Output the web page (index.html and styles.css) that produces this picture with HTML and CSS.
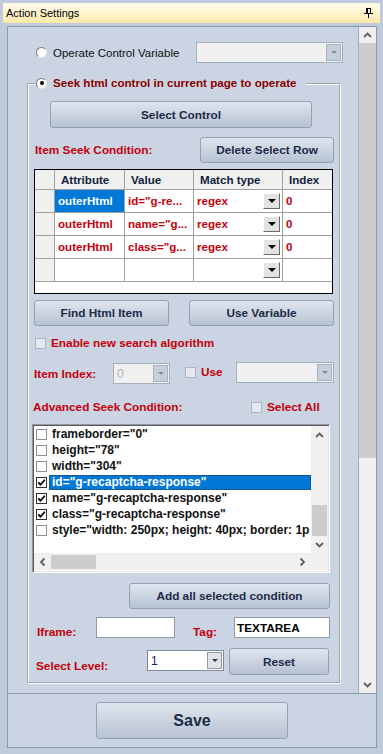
FILE: index.html
```html
<!DOCTYPE html>
<html lang="en">
<head>
    <meta charset="UTF-8">
    <meta name="viewport" content="width=device-width, initial-scale=1.0">
    <title>Action Settings</title>
    <link rel="stylesheet" href="styles.css">
</head>
<body>
    <div class="titlebar">
        <span class="title">Action Settings</span>
        <svg class="pin" width="9" height="10" viewBox="0 0 9 10">
            <rect x="2" y="0" width="5" height="1"/>
            <rect x="2" y="1" width="2" height="5"/>
            <rect x="6" y="1" width="1" height="5"/>
            <rect x="0" y="5" width="9" height="1"/>
            <rect x="4" y="6" width="1" height="4"/>
        </svg>
    </div>

    <div class="window">
        <div class="scroll-area">
            <div class="content">
                <div class="operate-row">
                    <span class="radio"></span>
                    <span class="operate-text">Operate Control Variable</span>
                    <div class="combo combo-off combo-var"><span class="drop"><i class="tri"></i></span></div>
                </div>

                <div class="group">
                    <div class="legend">
                        <span class="radio checked"></span>
                        <span>Seek html control in current page to operate</span>
                    </div>

                    <div class="g-row select-row">
                        <button class="btn btn-select">Select Control</button>
                    </div>

                    <div class="g-row cond-row">
                        <span class="label">Item Seek Condition:</span>
                        <button class="btn btn-delete">Delete Select Row</button>
                    </div>

                    <div class="grid-box">
                        <table class="grid">
                            <colgroup>
                                <col class="c0"><col class="c1"><col class="c2"><col class="c3"><col class="c4">
                            </colgroup>
                            <thead>
                                <tr><th class="rh"></th><th>Attribute</th><th>Value</th><th>Match type</th><th class="last">Index</th></tr>
                            </thead>
                            <tbody>
                                <tr>
                                    <td class="rh"></td>
                                    <td class="sel">outerHtml</td>
                                    <td>id="g-re...</td>
                                    <td><div class="match"><span>regex</span><span class="cell-drop"><i class="tri"></i></span></div></td>
                                    <td class="last">0</td>
                                </tr>
                                <tr>
                                    <td class="rh"></td>
                                    <td>outerHtml</td>
                                    <td>name="g...</td>
                                    <td><div class="match"><span>regex</span><span class="cell-drop"><i class="tri"></i></span></div></td>
                                    <td class="last">0</td>
                                </tr>
                                <tr>
                                    <td class="rh"></td>
                                    <td>outerHtml</td>
                                    <td>class="g...</td>
                                    <td><div class="match"><span>regex</span><span class="cell-drop"><i class="tri"></i></span></div></td>
                                    <td class="last">0</td>
                                </tr>
                                <tr>
                                    <td class="rh"></td>
                                    <td></td>
                                    <td></td>
                                    <td><div class="match"><span></span><span class="cell-drop"><i class="tri"></i></span></div></td>
                                    <td class="last"></td>
                                </tr>
                            </tbody>
                        </table>
                    </div>

                    <div class="g-row find-row">
                        <button class="btn btn-find">Find Html Item</button>
                        <button class="btn btn-usevar">Use Variable</button>
                    </div>

                    <div class="g-row enable-row">
                        <span class="check"></span>
                        <span class="label">Enable new search algorithm</span>
                    </div>

                    <div class="g-row index-row">
                        <span class="label index-label">Item Index:</span>
                        <div class="combo combo-off combo-index"><span class="value">0</span><span class="drop"><i class="tri"></i></span></div>
                        <span class="check use-check"></span>
                        <span class="label use-label">Use</span>
                        <div class="combo combo-off combo-use"><span class="drop"><i class="tri"></i></span></div>
                    </div>

                    <div class="g-row adv-row">
                        <span class="label adv-label">Advanced Seek Condition:</span>
                        <span class="check"></span>
                        <span class="label">Select All</span>
                    </div>

                    <div class="listbox">
                        <div class="list-main">
                            <div class="list-items">
                                <div class="item"><span class="cb"></span><span class="item-text">frameborder="0"</span></div>
                                <div class="item"><span class="cb"></span><span class="item-text">height="78"</span></div>
                                <div class="item"><span class="cb"></span><span class="item-text">width="304"</span></div>
                                <div class="item"><span class="cb on"><svg width="9" height="9" viewBox="0 0 9 9"><path d="M1.2 4.4l2.2 2.3 4.4-5"/></svg></span><span class="item-text selected">id="g-recaptcha-response"</span></div>
                                <div class="item"><span class="cb on"><svg width="9" height="9" viewBox="0 0 9 9"><path d="M1.2 4.4l2.2 2.3 4.4-5"/></svg></span><span class="item-text">name="g-recaptcha-response"</span></div>
                                <div class="item"><span class="cb on"><svg width="9" height="9" viewBox="0 0 9 9"><path d="M1.2 4.4l2.2 2.3 4.4-5"/></svg></span><span class="item-text">class="g-recaptcha-response"</span></div>
                                <div class="item"><span class="cb"></span><span class="item-text">style="width: 250px; height: 40px; border: 1p</span></div>
                            </div>
                            <div class="list-vscroll">
                                <span class="arrow"><svg class="chev" width="9" height="6" viewBox="0 0 9 6"><polyline points="1,5 4.5,1.5 8,5"/></svg></span>
                                <div class="track"><div class="thumb list-vthumb"></div></div>
                                <span class="arrow"><svg class="chev down" width="9" height="6" viewBox="0 0 9 6"><polyline points="1,5 4.5,1.5 8,5"/></svg></span>
                            </div>
                        </div>
                        <div class="list-hscroll">
                            <span class="arrow"><svg class="chev left" width="9" height="6" viewBox="0 0 9 6"><polyline points="1,5 4.5,1.5 8,5"/></svg></span>
                            <div class="htrack"><div class="thumb list-hthumb"></div></div>
                            <span class="arrow"><svg class="chev right" width="9" height="6" viewBox="0 0 9 6"><polyline points="1,5 4.5,1.5 8,5"/></svg></span>
                            <span class="corner"></span>
                        </div>
                    </div>

                    <div class="g-row add-row">
                        <button class="btn btn-add">Add all selected condition</button>
                    </div>

                    <div class="g-row frame-row">
                        <span class="label frame-label">Iframe:</span>
                        <div class="field field-frame"></div>
                        <span class="label tag-label">Tag:</span>
                        <div class="field field-tag">TEXTAREA</div>
                    </div>

                    <div class="g-row level-row">
                        <span class="label level-label">Select Level:</span>
                        <div class="combo combo-level"><span class="value">1</span><span class="drop"><i class="tri"></i></span></div>
                        <button class="btn btn-reset">Reset</button>
                    </div>
                </div>
            </div>

            <div class="vscroll">
                <span class="arrow"><svg class="chev" width="9" height="6" viewBox="0 0 9 6"><polyline points="1,5 4.5,1.5 8,5"/></svg></span>
                <div class="track"><div class="thumb main-thumb"></div></div>
                <span class="arrow"><svg class="chev down" width="9" height="6" viewBox="0 0 9 6"><polyline points="1,5 4.5,1.5 8,5"/></svg></span>
            </div>
        </div>

        <div class="footer">
            <button class="btn btn-save">Save</button>
        </div>
    </div>
</body>
</html>
```

FILE: styles.css
```css
body {
    margin: 0;
    background: #bfcbdc;
    font-family: "Liberation Sans", Arial, sans-serif;
    font-size: 11.8px;
    font-weight: bold;
    line-height: 14px;
    color: #1d2b48;
}

/* title bar */
.titlebar {
    display: flex;
    align-items: center;
    justify-content: space-between;
    height: 20px;
    margin: 3px 3px 0;
    padding: 0 7px 0 3px;
    box-sizing: border-box;
    background: linear-gradient(#fffcec, #fff3ca 55%, #fde7a6);
}

.title {
    font-size: 11px;
    font-weight: normal;
    color: #000;
}

.pin {
    fill: #000;
}

/* window */
.window {
    height: 722px;
    margin: 3px 6px 0 7px;
    box-sizing: border-box;
    border: 1px solid #8e99a8;
    background: #cbd4e2;
    display: flex;
    flex-direction: column;
}

.scroll-area {
    display: flex;
    height: 667px;
    box-sizing: border-box;
    border-bottom: 1px solid #8e99a8;
}

.content {
    width: 350px;
    overflow: hidden;
}

.footer {
    flex: 1;
    display: flex;
    justify-content: center;
    align-items: flex-start;
}

/* scrollbars */
.vscroll {
    width: 17px;
    border-left: 1px solid #a3acb9;
    background: #f0f0f0;
    display: flex;
    flex-direction: column;
}

.arrow {
    flex: none;
    width: 17px;
    height: 16px;
    display: flex;
    align-items: center;
    justify-content: center;
}

.chev polyline {
    fill: none;
    stroke: #5e5e5e;
    stroke-width: 1.8;
}

.chev.down {
    transform: rotate(180deg);
}

.chev.left {
    transform: rotate(-90deg);
}

.chev.right {
    transform: rotate(90deg);
}

.track {
    flex: 1;
}

.thumb {
    background: #cdcdcd;
}

.main-thumb {
    height: 415px;
}

/* radio and check boxes */
.radio {
    flex: none;
    width: 11px;
    height: 11px;
    box-sizing: border-box;
    border-radius: 50%;
    border: 1px solid;
    border-color: #7a7a7a #e4e4e4 #e4e4e4 #7a7a7a;
    background: #fff;
    display: flex;
    align-items: center;
    justify-content: center;
}

.radio.checked::after {
    content: "";
    width: 4px;
    height: 4px;
    border-radius: 50%;
    background: #000;
}

.check {
    flex: none;
    width: 11px;
    height: 11px;
    box-sizing: border-box;
    border: 1px solid #adb5c1;
    background: #e6eaf0;
}

/* operate row */
.operate-row {
    display: flex;
    align-items: center;
    height: 21px;
    margin-top: 15px;
    padding-left: 28px;
}

.operate-text {
    width: 143px;
    margin-left: 6px;
    font-size: 11.5px;
    font-weight: normal;
    color: #111;
}

/* combos */
.combo {
    flex: none;
    display: flex;
    height: 21px;
    box-sizing: border-box;
    border: 1px solid #a5aebb;
    background: #f0f0f0;
}

.combo .value {
    padding: 3px 0 0 3px;
    font-weight: normal;
    font-size: 12px;
}

.combo .drop {
    width: 15px;
    margin: 1px 1px 1px auto;
    box-sizing: border-box;
    border: 1px solid #a8b1bf;
    background: #c6cfdc;
    display: flex;
    align-items: center;
    justify-content: center;
}

.tri {
    width: 0;
    height: 0;
    border-left: 3px solid transparent;
    border-right: 3px solid transparent;
    border-top: 3px solid #8c8c8c;
}

.combo-var {
    width: 147px;
}

.combo-index {
    width: 57px;
    margin-top: 1px;
}

.combo-index .value {
    color: #b0b0b0;
}

.combo-use {
    width: 98px;
    margin-left: auto;
    margin-right: 5px;
}

.combo-level {
    width: 77px;
    margin-top: 2px;
    border-color: #7f8b9c;
    background: #fff;
}

.combo-level .value {
    color: #1a2250;
}

.combo-level .drop {
    border-color: #8d98a8;
    background: #e1e5eb;
}

.combo-level .tri {
    border-top-color: #333;
}

/* group box */
.group {
    width: 313px;
    margin: 20px 0 0 19px;
    padding-bottom: 7px;
    box-sizing: border-box;
    border: 1px solid #9aa4b3;
    box-shadow: 1px 1px 0 #fff, inset 1px 1px 0 #fff;
}

.legend {
    display: flex;
    align-items: center;
    gap: 6px;
    width: max-content;
    height: 14px;
    margin: -8px 0 0 7px;
    padding: 0 9px 0 1px;
    background: #cbd4e2;
    color: #8b0000;
    font-size: 11.6px;
}

.g-row {
    display: flex;
    align-items: center;
}

.label {
    color: #c4000c;
}

/* buttons */
.btn {
    flex: none;
    padding: 0;
    box-sizing: border-box;
    border: 1px solid #95a0b0;
    border-radius: 3px;
    background: linear-gradient(#dfe5ee, #b7c2d2);
    font-family: inherit;
    font-size: 11.8px;
    font-weight: bold;
    color: #1d2b48;
}

.select-row {
    margin-top: 11px;
}

.btn-select {
    width: 262px;
    height: 27px;
    margin-left: 22px;
}

.cond-row {
    height: 26px;
    margin-top: 9px;
}

.cond-row .label {
    margin-left: 7px;
}

.btn-delete {
    width: 134px;
    height: 26px;
    margin-left: auto;
    margin-right: 5px;
}

/* grid */
.grid-box {
    width: 299px;
    height: 125px;
    margin: 6px 0 0 6px;
    box-sizing: border-box;
    border: 1px solid #000;
    background: #fff;
}

.grid {
    width: 297px;
    table-layout: fixed;
    border-collapse: separate;
    border-spacing: 0;
}

.c0 { width: 20px; }
.c1 { width: 70px; }
.c2 { width: 69px; }
.c3 { width: 89px; }
.c4 { width: 49px; }

.grid th,
.grid td {
    padding: 0 0 0 3px;
    border-right: 1px solid #a0a0a0;
    border-bottom: 1px solid #a0a0a0;
    white-space: nowrap;
    overflow: hidden;
    text-align: left;
}

.grid th {
    height: 19px;
    padding-left: 6px;
    background: #f0f0f0;
    color: #0f1e3c;
    font-size: 11.6px;
}

.grid td {
    height: 22px;
    color: #c4000c;
    font-size: 11.6px;
}

.grid .last {
    border-right: none;
}

.grid td.rh {
    background: #f0f0f0;
}

.grid td.sel {
    background: #0078d7;
    color: #fff;
}

.match {
    display: flex;
    align-items: center;
    justify-content: space-between;
    padding-right: 2px;
}

.cell-drop {
    width: 17px;
    height: 16px;
    box-sizing: border-box;
    border: 1px solid;
    border-color: #fff #6b6b6b #6b6b6b #fff;
    background: #e3e3e3;
    display: flex;
    align-items: center;
    justify-content: center;
}

.cell-drop .tri {
    border-left-width: 4px;
    border-right-width: 4px;
    border-top: 4px solid #000;
}

/* buttons under grid */
.find-row {
    height: 26px;
    margin-top: 6px;
}

.btn-find {
    width: 135px;
    height: 26px;
    margin-left: 6px;
}

.btn-usevar {
    width: 145px;
    height: 26px;
    margin-left: auto;
    margin-right: 5px;
}

.enable-row {
    height: 16px;
    margin-top: 9px;
    padding-left: 7px;
    gap: 5px;
}

.index-row {
    height: 22px;
    margin-top: 11px;
    align-items: flex-start;
}

.index-label {
    width: 79px;
    margin-left: 6px;
    padding-top: 5px;
}

.use-check {
    margin: 5px 0 0 15px;
}

.use-label {
    margin-left: 5px;
    padding-top: 3px;
}

.adv-row {
    height: 18px;
    margin-top: 14px;
    gap: 5px;
}

.adv-label {
    width: 213px;
    margin-left: 5px;
}

/* list box */
.listbox {
    width: 298px;
    height: 149px;
    margin: 8px 0 0 4px;
    box-sizing: border-box;
    border: 1px solid;
    border-color: #8f97a4 #fff #fff #8f97a4;
    box-shadow: inset 1px 1px 0 #5a5a5a, inset -1px -1px 0 #e3e3e3;
    padding: 1px;
    background: #fff;
    display: flex;
    flex-direction: column;
}

.list-main {
    display: flex;
    height: 127px;
}

.list-items {
    flex: 1;
    overflow: hidden;
}

.item {
    display: flex;
    align-items: center;
    height: 16px;
    padding-left: 2px;
}

.cb {
    flex: none;
    width: 11px;
    height: 11px;
    box-sizing: border-box;
    border: 1px solid #8e8e8e;
    background: #fff;
    display: flex;
    align-items: center;
    justify-content: center;
}

.cb.on {
    border-color: #333;
}

.cb path {
    fill: none;
    stroke: #000;
    stroke-width: 1.7;
}

.item-text {
    margin-left: 2px;
    padding: 0 3px;
    height: 15px;
    line-height: 15px;
    box-sizing: border-box;
    white-space: nowrap;
    font-size: 12px;
    color: #111;
}

.item-text.selected {
    flex: 1;
    padding: 0 2px;
    border: 1px dotted #3a3a3a;
    line-height: 13px;
    background: #0078d7;
    color: #fff;
}

.list-vscroll {
    width: 17px;
    background: #f0f0f0;
    display: flex;
    flex-direction: column;
}

.list-vscroll .arrow {
    height: 17px;
}

.list-vthumb {
    height: 31px;
    margin: 62px 1px 0;
}

.list-hscroll {
    display: flex;
    height: 17px;
    background: #f0f0f0;
}

.list-hscroll .arrow {
    width: 17px;
    height: 17px;
}

.htrack {
    width: 243px;
    display: flex;
    align-items: center;
}

.list-hthumb {
    width: 45px;
    height: 14px;
}

.corner {
    flex: 1;
    background: #f0f0f0;
}

/* bottom rows */
.add-row {
    height: 26px;
    margin-top: 10px;
}

.btn-add {
    width: 201px;
    height: 26px;
    margin-left: 101px;
}

.frame-row {
    height: 21px;
    margin-top: 8px;
    align-items: flex-start;
}

.frame-label {
    width: 59px;
    margin-left: 9px;
    padding-top: 8px;
}

.tag-label {
    width: 41px;
    margin-left: 18px;
    padding-top: 8px;
}

.field {
    flex: none;
    height: 21px;
    box-sizing: border-box;
    border: 1px solid #8e99a9;
    background: #fff;
    padding: 3px 0 0 2px;
    color: #000;
}

.field-frame {
    width: 79px;
}

.field-tag {
    width: 96px;
}

.level-row {
    height: 27px;
    margin-top: 10px;
    align-items: flex-start;
}

.level-label {
    width: 111px;
    margin-left: 8px;
    padding-top: 11px;
}

.btn-reset {
    width: 100px;
    height: 27px;
    margin-left: 5px;
}

.btn-save {
    width: 192px;
    height: 37px;
    margin-top: 8px;
    font-size: 16px;
}
```
